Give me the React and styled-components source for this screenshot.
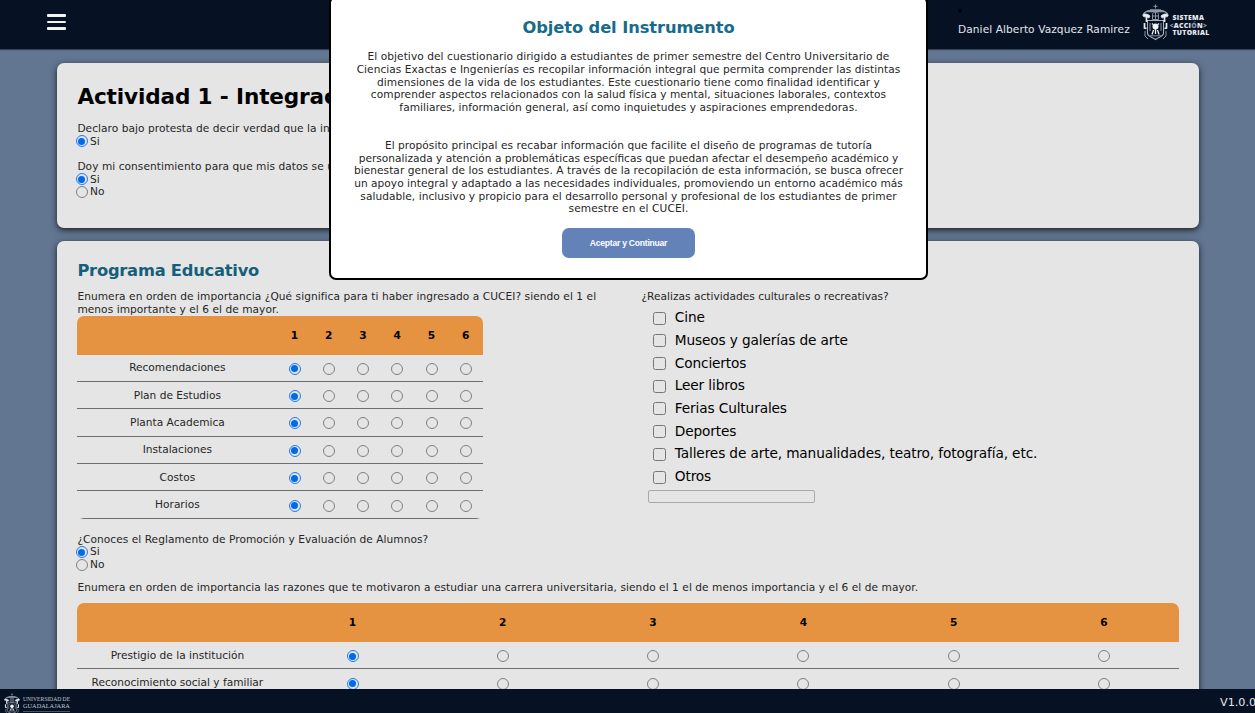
import React from "react";
import styled, { createGlobalStyle } from "styled-components";

const Global = createGlobalStyle`
  * { box-sizing: border-box; }
  html, body, #root { height: 100%; }
  body {
    margin: 0;
    overflow: hidden;
    background: #627591;
    color: #262626;
    font: 10.6px/12.65px Verdana, "DejaVu Sans", sans-serif;
  }
`;

const Page = styled.div`
  height: 100vh;
  display: flex;
  flex-direction: column;
  overflow: hidden;
`;

const Header = styled.header`
  flex: none;
  height: 49px;
  background: #061124;
  box-shadow: 0 1px 1px rgba(6, 17, 36, 0.5);
  display: flex;
  align-items: flex-start;
  padding: 0 45px 0 47px;
`;

const MenuButton = styled.button`
  width: 19px;
  height: 16px;
  margin: 14px auto 0 0;
  padding: 0;
  border: 0;
  background: none;
  display: flex;
  flex-direction: column;
  justify-content: space-between;
`;

const MenuBar = styled.span`
  height: 2.6px;
  border-radius: 1px;
  background: #f2f2f2;
`;

const UserItem = styled.div`
  width: 184px;
  padding-top: 9px;
  color: #e4e6ea;
  white-space: nowrap;
`;

const Dot = styled.div`
  width: 4px;
  height: 4px;
  border-radius: 50%;
  background: #000;
`;

const UserName = styled.div`
  margin-top: 10px;
  letter-spacing: 0.08px;
`;

const Brand = styled.div`
  display: flex;
  align-items: center;
  gap: 3.5px;
  width: 68px;
  padding-top: 4px;
  color: #e8eaee;
`;

const BrandText = styled.div`
  font: 800 6.8px/7.4px "Open Sans", sans-serif;
  letter-spacing: 0.32px;
  white-space: nowrap;
  padding-top: 6px;

  span { display: block; }
  span:nth-child(2) { margin-left: -3px; }
  i { font-style: normal; color: #8f98a8; }
`;

const Main = styled.main`
  flex: 1;
  min-height: 0;
  overflow: hidden;
  padding: 14px 56px 0 57px;
  display: flex;
  flex-direction: column;
  gap: 13.5px;
`;

const Card = styled.section`
  flex: none;
  height: ${(p) => p.$height}px;
  padding: ${(p) => p.$top}px 20px 0 20.4px;
  border-radius: 7px;
  background: #e5e5e5;
  box-shadow: 0 2px 6px rgba(0, 0, 0, 0.75);
`;

const Title = styled.h1`
  margin: 0 0 12px;
  font-size: 21.6px;
  line-height: 26px;
  color: #000;
  white-space: nowrap;
  letter-spacing: -0.15px;
`;

const SectionTitle = styled.h2`
  margin: 0;
  font-size: 16.3px;
  line-height: 20px;
  color: ${(p) => p.$color || "#155f7b"};
  white-space: nowrap;
  letter-spacing: ${(p) => p.$ls || 0}px;
`;

const Line = styled.div`
  white-space: nowrap;
  letter-spacing: ${(p) => p.$ls ?? 0.055}px;
`;

const Options = styled.div`
  margin-bottom: ${(p) => p.$gap || 0}px;
`;

const Option = styled.label`
  display: flex;
  align-items: center;
  gap: 2.3px;
  height: 12.65px;
  margin-left: -1.6px;
`;

const Radio = styled.input.attrs({ type: "radio" })`
  flex: none;
  appearance: none;
  display: grid;
  place-items: center;
  width: 12px;
  height: 12px;
  margin: 1px 0 0;
  border: 1px solid #808080;
  border-radius: 50%;

  &:checked { border-color: #1a7df5; }
  &:checked::before {
    content: "";
    width: 7px;
    height: 7px;
    border-radius: 50%;
    background: #0069ec;
  }
`;

const Columns = styled.div`
  display: grid;
  grid-template-columns: 564px 1fr;
  margin-top: 9.3px;
`;

const Matrix = styled.div`
  width: ${(p) => p.$width};
  border-radius: 7px;
  overflow: hidden;
`;

const MatrixRow = styled.div`
  display: grid;
  grid-template-columns: 200px repeat(6, 1fr);
  align-items: center;
  justify-items: center;
  height: 27.35px;
  border-bottom: 1.5px solid #6f6f6f;
  white-space: nowrap;

  input { margin-top: 2px; }
`;

const MatrixHead = styled(MatrixRow)`
  height: 39px;
  border: 0;
  background: #e59340;
  color: #000;
  font-weight: bold;
`;

const CheckList = styled.div`
  margin: 3.4px 0 0 11.4px;
`;

const CheckItem = styled.label`
  display: flex;
  align-items: center;
  gap: 9px;
  height: 22.7px;
  color: #000;
  font-size: 13.7px;
  white-space: nowrap;
  letter-spacing: -0.13px;

  input {
    width: 13px;
    height: 13px;
    margin: 1px 0 0;
    appearance: none;
    border: 1px solid #767676;
    border-radius: 2.5px;
  }
`;

const OtherInput = styled.input`
  display: block;
  width: 167.5px;
  height: 13px;
  margin: 2.6px 0 0 6.5px;
  padding: 0;
  border: 1px solid #a9a9a9;
  border-radius: 2px;
  background: transparent;
`;

const Footer = styled.footer`
  flex: none;
  height: 24px;
  background: #061124;
  color: #e4e6ea;
  display: flex;
  justify-content: space-between;
  padding-left: 4px;
  overflow: hidden;
`;

const University = styled.div`
  display: flex;
  gap: 3px;
  padding-top: 4px;
  color: #c3c8d0;
  font: 6.4px/6.5px "Liberation Serif", serif;
  white-space: nowrap;
`;

const UniversityName = styled.div`
  padding-top: 3px;
`;

const UniversityLine = styled.div`
  font-size: ${(p) => p.$size}px;
`;

const Rule = styled.div`
  height: 1px;
  width: 47px;
  margin-top: 2px;
  background: #4a5465;
`;

const Version = styled.div`
  width: 35px;
  padding-top: 8px;
  white-space: nowrap;
  font-size: 11.2px;
`;

const Modal = styled.div`
  position: fixed;
  z-index: 2;
  left: 329px;
  top: -4px;
  width: 599px;
  height: 284px;
  padding-top: 20.3px;
  border: 2px solid #000;
  border-radius: 7px;
  background: #fff;
  display: flex;
  flex-direction: column;
  align-items: center;
  text-align: center;
`;

const Paragraph = styled.div`
  margin: ${(p) => p.$top}px 0 0;
`;

const Accept = styled.button`
  width: 133.5px;
  height: 30px;
  margin-top: 12.9px;
  border: 0;
  border-radius: 7px;
  background: #6382b8;
  color: #fff;
  font: bold 8.6px "Liberation Sans", Arial, sans-serif;
  letter-spacing: -0.25px;
`;

function Crest({ width, height }) {
  return (
    <svg width={width} height={height} viewBox="0 0 27 37" fill="none" stroke="#cfd4dc" style={{ flex: "none" }}>
      <path d="M13.5 .5v4M11.500 2.300h4" stroke="#8992a2" />
      <path d="M1.500 10C5 4.500 22 4.500 25.500 10M4.500 7.500h18M8 6h11" strokeWidth="1.4" stroke="#8d97a7" />
      <path d="M1 10.500c1.500-1 5-.5 7 1.500l-1 2c-2-1.500-4.500-.5-6-2zM26 10.500c-1.500-1-5-.5-7 1.500l1 2c2-1.500 4.500-.5 6-2z" fill="#eef0f3" />
      <path d="M10.500 10.500c0-3 6-3 6 0v5h-6zM13.500 8.500v8M11 12h5" stroke="#8d97a7" />
      <path d="M5.500 16.500h16V29c0 4-5.500 4-8 6.500C11 33 5.500 33 5.500 29z" strokeWidth="1.1" stroke="#a8b0bc" />
      <path d="M4.500 13v5M22.500 13v5M2.500 19v5l2 .5M24.500 19v5l-2 .5" strokeWidth="1.7" stroke="#e8eaee" />
      <path d="M3 27v5l3 3M24 27v5l-3 3M8 19v8M19 19v8" stroke="#8d97a7" />
      <circle cx="13.500" cy="22.500" r="3" fill="#f2f3f5" stroke="none" />
      <path d="M13.500 25v5M10 30.500l1.500-4.500M17 30.500l-1.500-4.500M10 19.500l1 1M17 19.500l-1 1" strokeWidth="1.3" stroke="#eef0f3" />
      <path d="M8 31.800h11" stroke="#8992a2" />
    </svg>
  );
}

const NUMBERS = [1, 2, 3, 4, 5, 6];

function RatingMatrix({ name, width, rows }) {
  return (
    <Matrix $width={width}>
      <MatrixHead>
        <span />
        {NUMBERS.map((n) => <span key={n}>{n}</span>)}
      </MatrixHead>
      {rows.map((row) => (
        <MatrixRow key={row}>
          <span>{row}</span>
          {NUMBERS.map((n) => <Radio key={n} name={name + row} defaultChecked={n === 1} />)}
        </MatrixRow>
      ))}
    </Matrix>
  );
}

function Choice({ name, options, gap }) {
  return (
    <Options $gap={gap}>
      {options.map((o, i) => (
        <Option key={o}>
          <Radio name={name} defaultChecked={i === 0} />
          {o}
        </Option>
      ))}
    </Options>
  );
}

const ACTIVITIES = [
  "Cine",
  "Museos y galerías de arte",
  "Conciertos",
  "Leer libros",
  "Ferias Culturales",
  "Deportes",
  "Talleres de arte, manualidades, teatro, fotografía, etc.",
  "Otros",
];

const GOAL = [
  ["El objetivo del cuestionario dirigido a estudiantes de primer semestre del Centro Universitario de", 0.066],
  ["Ciencias Exactas e Ingenierías es recopilar información integral que permita comprender las distintas", 0.045],
  ["dimensiones de la vida de los estudiantes. Este cuestionario tiene como finalidad identificar y", 0.045],
  ["comprender aspectos relacionados con la salud física y mental, situaciones laborales, contextos", 0.05],
  ["familiares, información general, así como inquietudes y aspiraciones emprendedoras.", 0.04],
];

const PURPOSE = [
  ["El propósito principal es recabar información que facilite el diseño de programas de tutoría", 0.045],
  ["personalizada y atención a problemáticas específicas que puedan afectar el desempeño académico y", 0],
  ["bienestar general de los estudiantes. A través de la recopilación de esta información, se busca ofrecer", 0.045],
  ["un apoyo integral y adaptado a las necesidades individuales, promoviendo un entorno académico más", 0.03],
  ["saludable, inclusivo y propicio para el desarrollo personal y profesional de los estudiantes de primer", 0.045],
  ["semestre en el CUCEI.", 0.1],
];

export default function App() {
  return (
    <Page>
      <Global />
      <Header>
        <MenuButton aria-label="Menú"><MenuBar /><MenuBar /><MenuBar /></MenuButton>
        <UserItem>
          <Dot />
          <UserName>Daniel Alberto Vazquez Ramirez</UserName>
        </UserItem>
        <Brand>
          <Crest width={27} height={37} />
          <BrandText>
            <span>SISTEMA</span>
            <span><i>&lt;</i>ACCI<i>Ó</i>N<i>&gt;</i></span>
            <span>TUTORIAL</span>
          </BrandText>
        </Brand>
      </Header>

      <Main>
        <Card $height={164.5} $top={21}>
          <Title>Actividad 1 - Integración</Title>
          <Line>Declaro bajo protesta de decir verdad que la información</Line>
          <Choice name="verdad" options={["Si"]} gap={12.65} />
          <Line>Doy mi consentimiento para que mis datos se utilicen</Line>
          <Choice name="datos" options={["Si", "No"]} />
        </Card>

        <Card $height={600} $top={20}>
          <SectionTitle $ls={-0.22}>Programa Educativo</SectionTitle>
          <Columns>
            <div>
              <Line $ls={0.067}>Enumera en orden de importancia ¿Qué significa para ti haber ingresado a CUCEI? siendo el 1 el</Line>
              <Line>menos importante y el 6 el de mayor.</Line>
              <RatingMatrix
                name="ingreso"
                width="405.5px"
                rows={["Recomendaciones", "Plan de Estudios", "Planta Academica", "Instalaciones", "Costos", "Horarios"]}
              />
            </div>
            <div>
              <Line $ls={0.02}>¿Realizas actividades culturales o recreativas?</Line>
              <CheckList>
                {ACTIVITIES.map((a) => (
                  <CheckItem key={a}><input type="checkbox" />{a}</CheckItem>
                ))}
              </CheckList>
              <OtherInput />
            </div>
          </Columns>
          <Paragraph $top={14}>
            <Line $ls={0.045}>¿Conoces el Reglamento de Promoción y Evaluación de Alumnos?</Line>
          </Paragraph>
          <Choice name="reglamento" options={["Si", "No"]} gap={10} />
          <Line>Enumera en orden de importancia las razones que te motivaron a estudiar una carrera universitaria, siendo el 1 el de menos importancia y el 6 el de mayor.</Line>
          <Paragraph $top={9.8}>
            <RatingMatrix name="razones" width="100%" rows={["Prestigio de la institución", "Reconocimiento social y familiar"]} />
          </Paragraph>
        </Card>
      </Main>

      <Footer>
        <University>
          <Crest width={16} height={22} />
          <UniversityName>
            <UniversityLine $size={5.6}>UNIVERSIDAD DE</UniversityLine>
            <UniversityLine $size={6.3}>GUADALAJARA</UniversityLine>
            <Rule />
          </UniversityName>
        </University>
        <Version>V1.0.0</Version>
      </Footer>

      <Modal>
        <SectionTitle $color="#176b8b" $ls={-0.08}>Objeto del Instrumento</SectionTitle>
        <Paragraph $top={12}>{GOAL.map(([t, ls]) => <Line key={t} $ls={ls}>{t}</Line>)}</Paragraph>
        <Paragraph $top={25.3}>{PURPOSE.map(([t, ls]) => <Line key={t} $ls={ls}>{t}</Line>)}</Paragraph>
        <Accept>Aceptar y Continuar</Accept>
      </Modal>
    </Page>
  );
}
